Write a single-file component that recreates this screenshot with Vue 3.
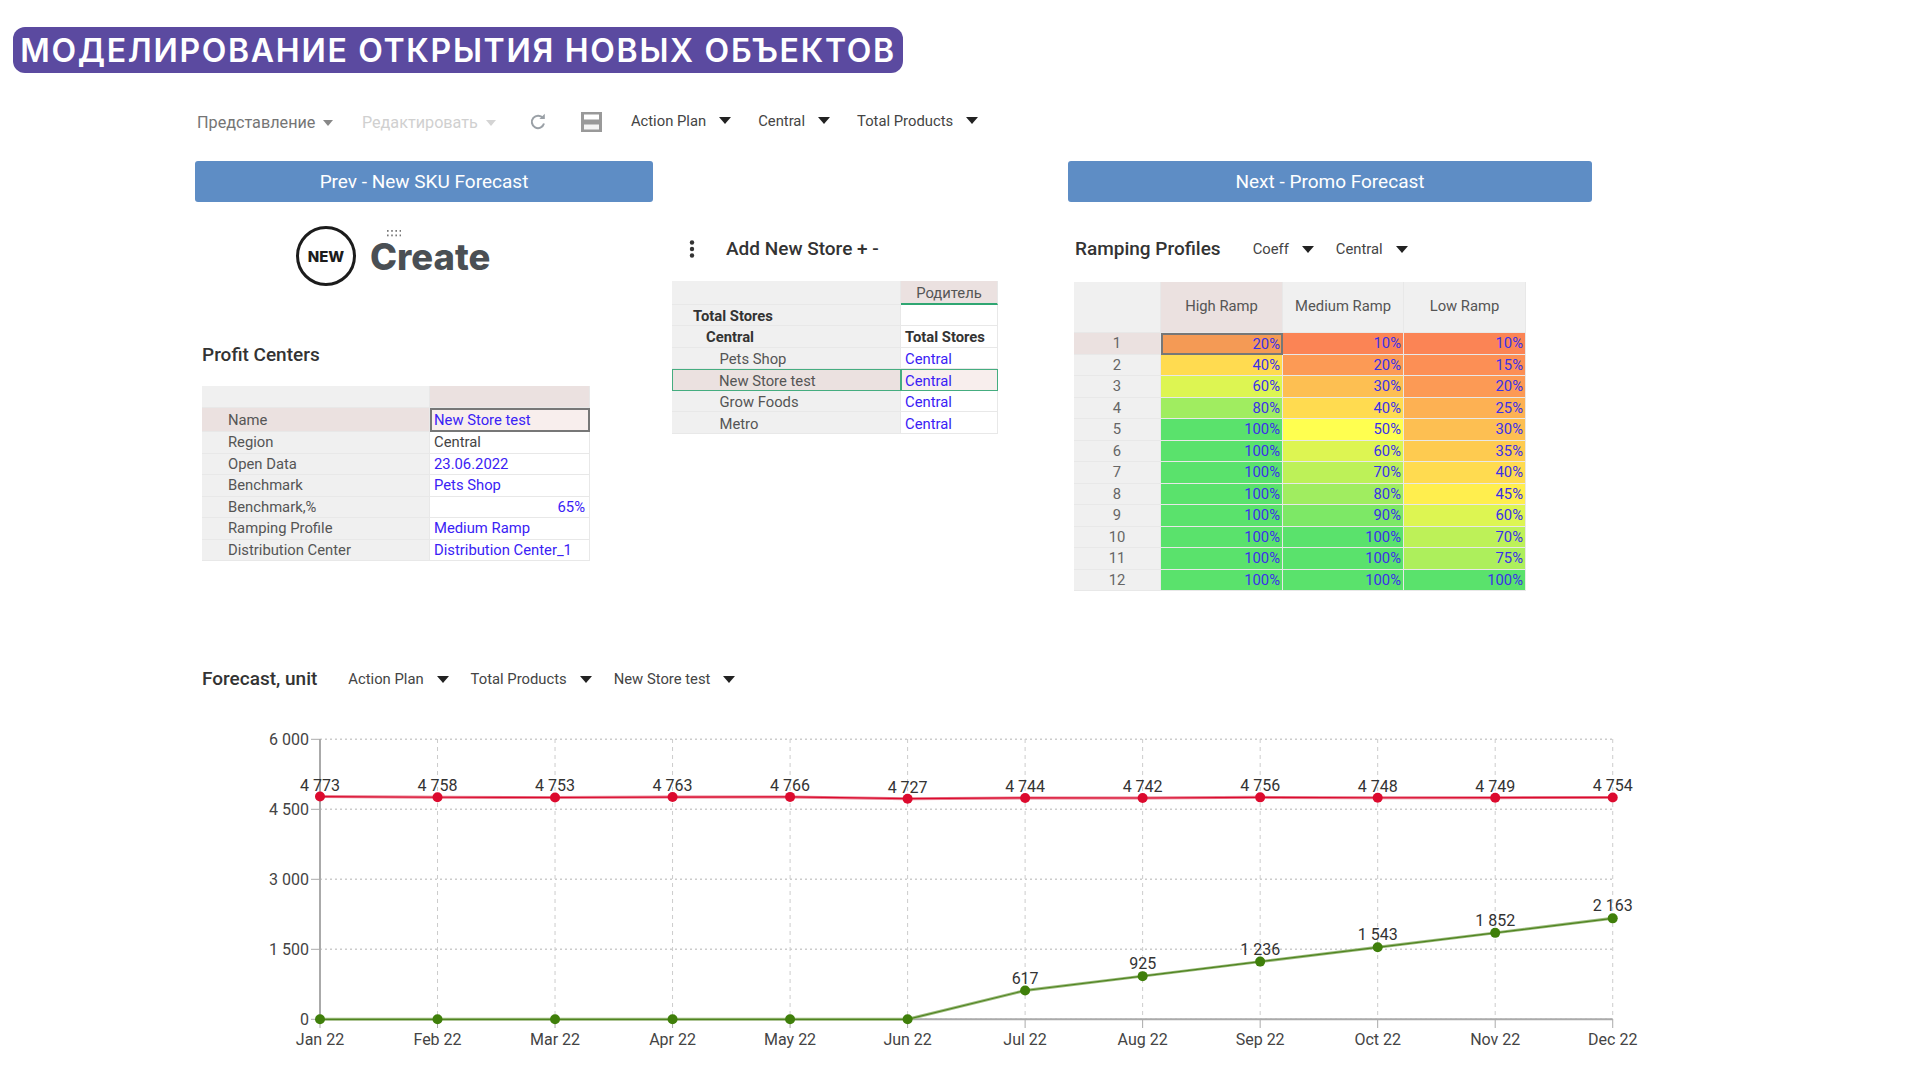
<script setup>
const toolbar = ['Action Plan', 'Central', 'Total Products']

const profit = [
  { name: 'Name', value: 'New Store test', blue: true, active: true },
  { name: 'Region', value: 'Central' },
  { name: 'Open Data', value: '23.06.2022', blue: true },
  { name: 'Benchmark', value: 'Pets Shop', blue: true },
  { name: 'Benchmark,%', value: '65%', blue: true, right: true },
  { name: 'Ramping Profile', value: 'Medium Ramp', blue: true },
  { name: 'Distribution Center', value: 'Distribution Center_1', blue: true }
]

const stores = [
  { name: 'Total Stores', level: 0, bold: true, parent: '' },
  { name: 'Central', level: 1, bold: true, parent: 'Total Stores', parentBold: true },
  { name: 'Pets Shop', level: 2, parent: 'Central' },
  { name: 'New Store test', level: 2, parent: 'Central', active: true },
  { name: 'Grow Foods', level: 2, parent: 'Central' },
  { name: 'Metro', level: 2, parent: 'Central' }
]

const heat = {
  10: '#fb8455', 15: '#fc8f55', 20: '#fc9a55', 25: '#fdb153', 30: '#fdbf52', 35: '#fecb50',
  40: '#ffdb50', 45: '#ffee4e', 50: '#ffff50', 60: '#ddf552', 70: '#bdf158', 75: '#adef5c',
  80: '#a0ed60', 90: '#7de866', 100: '#5ae26c'
}

const ramping = [
  [20, 10, 10], [40, 20, 15], [60, 30, 20], [80, 40, 25], [100, 50, 30], [100, 60, 35],
  [100, 70, 40], [100, 80, 45], [100, 90, 60], [100, 100, 70], [100, 100, 75], [100, 100, 100]
]

const months = ['Jan 22', 'Feb 22', 'Mar 22', 'Apr 22', 'May 22', 'Jun 22', 'Jul 22', 'Aug 22', 'Sep 22', 'Oct 22', 'Nov 22', 'Dec 22']
const red = [4773, 4758, 4753, 4763, 4766, 4727, 4744, 4742, 4756, 4748, 4749, 4754]
const green = [0, 0, 0, 0, 0, 0, 617, 925, 1236, 1543, 1852, 2163]
const ticks = [0, 1500, 3000, 4500, 6000]

// chart coordinates are page pixels, the svg viewBox starts at y=695
const xAt = (i) => 320 + i * 117.52
const yAt = (v) => 1019.3 - v * (280 / 6000)
const fmt = (v) => String(v).replace(/\B(?=(\d{3})+$)/g, ' ')
const line = (vals) => vals.map((v, i) => `${xAt(i)},${yAt(v)}`).join(' ')
</script>

<template>
  <div class="page">
    <div class="pill">МОДЕЛИРОВАНИЕ ОТКРЫТИЯ НОВЫХ ОБЪЕКТОВ</div>

    <div class="toolbar">
      <span class="menu">Представление<i class="caret caret-grey"></i></span>
      <span class="menu menu-off">Редактировать<i class="caret caret-light"></i></span>
      <svg class="ico-refresh" width="18" height="18" viewBox="0 0 18 18" fill="none">
        <path d="M14 5.2A6.2 6.2 0 1 0 15 10.6" stroke="#9aa0a6" stroke-width="2" />
        <path d="M10.4 6h5.4V.8z" fill="#9aa0a6" />
      </svg>
      <svg class="ico-save" width="21" height="20" viewBox="0 0 21 20">
        <rect width="21" height="20" fill="#999" />
        <rect x="3" y="2.5" width="15" height="5" fill="#fff" />
        <rect x="3" y="12.5" width="15" height="5" fill="#f4f4f4" />
      </svg>
      <span v-for="t in toolbar" :key="t" class="drop">{{ t }}<i class="caret"></i></span>
    </div>

    <div class="nav">
      <button class="nav-btn nav-prev">Prev - New SKU Forecast</button>
      <button class="nav-btn nav-next">Next - Promo Forecast</button>
    </div>

    <div class="panels">
      <section class="panel panel-left">
        <div class="logo">
          <div class="logo-badge">NEW</div>
          <div class="logo-text">
            <svg class="logo-dots" width="14" height="7" viewBox="0 0 14 7" fill="#777">
              <template v-for="row in 2" :key="row">
                <rect v-for="col in 4" :key="col" :x="(col - 1) * 4.2" :y="(row - 1) * 4.5" width="1.6" height="1.8" />
              </template>
            </svg>
            Create
          </div>
        </div>
        <h2 class="title title-profit">Profit Centers</h2>
        <div class="grid grid-profit">
          <div class="cell head"></div>
          <div class="cell head head-on"></div>
          <template v-for="row in profit" :key="row.name">
            <div class="cell label" :class="{ 'label-on': row.active }">{{ row.name }}</div>
            <div class="cell val" :class="{ blue: row.blue, right: row.right, 'val-focus': row.active }">{{ row.value }}</div>
          </template>
        </div>
      </section>

      <section class="panel panel-mid">
        <div class="panel-head">
          <svg class="dots" width="6" height="18" viewBox="0 0 6 18" fill="#333">
            <circle cx="3" cy="2.5" r="2.2" />
            <circle cx="3" cy="9" r="2.2" />
            <circle cx="3" cy="15.5" r="2.2" />
          </svg>
          <h2 class="title">Add New Store + -</h2>
        </div>
        <div class="grid grid-stores">
          <div class="cell head"></div>
          <div class="cell head head-on head-green">Родитель</div>
          <template v-for="row in stores" :key="row.name">
            <div class="cell label" :class="['lv' + row.level, { bold: row.bold, 'label-on': row.active, 'sel-left': row.active }]">{{ row.name }}</div>
            <div class="cell val" :class="{ blue: !row.parentBold && row.parent, bold: row.parentBold, 'val-on': row.active, 'sel-right': row.active }">{{ row.parent }}</div>
          </template>
        </div>
      </section>

      <section class="panel panel-right">
        <div class="panel-head head-ramp">
          <h2 class="title">Ramping Profiles</h2>
          <span class="drop drop-coeff">Coeff<i class="caret"></i></span>
          <span class="drop">Central<i class="caret"></i></span>
        </div>
        <div class="grid grid-ramp">
          <div class="cell head"></div>
          <div class="cell head head-on center head-ramp-cell">High Ramp</div>
          <div class="cell head center head-ramp-cell">Medium Ramp</div>
          <div class="cell head center head-ramp-cell">Low Ramp</div>
          <template v-for="(row, i) in ramping" :key="i">
            <div class="cell label center" :class="{ 'label-on': i === 0 }">{{ i + 1 }}</div>
            <div
              v-for="(v, j) in row"
              :key="j"
              class="cell pct"
              :class="{ 'pct-focus': i === 0 && j === 0 }"
              :style="{ background: i === 0 && j === 0 ? '#f49a55' : heat[v] }"
            >{{ v }}%</div>
          </template>
        </div>
      </section>
    </div>

    <div class="forecast-head">
      <h2 class="title">Forecast, unit</h2>
      <span class="drop">Action Plan<i class="caret"></i></span>
      <span class="drop">Total Products<i class="caret"></i></span>
      <span class="drop">New Store test<i class="caret"></i></span>
    </div>

    <svg class="chart" width="1700" height="385" viewBox="0 695 1700 385">
      <g v-for="t in ticks" :key="t">
        <line class="grid-h" x1="320" :x2="xAt(11)" :y1="yAt(t)" :y2="yAt(t)" />
        <line class="axis" x1="311" x2="320" :y1="yAt(t)" :y2="yAt(t)" />
        <text class="txt" x="309" :y="yAt(t) + 5.5" text-anchor="end">{{ fmt(t) }}</text>
      </g>
      <g v-for="(m, i) in months" :key="m">
        <line class="grid-v" :x1="xAt(i)" :x2="xAt(i)" y1="739" y2="1019" />
        <line class="axis" :x1="xAt(i)" :x2="xAt(i)" y1="1019" y2="1028" />
        <text class="txt" :x="xAt(i)" y="1045" text-anchor="middle">{{ m }}</text>
      </g>
      <line class="axis axis-main" x1="320" x2="320" y1="739" y2="1019.3" />
      <line class="axis axis-main" x1="320" :x2="xAt(11)" y1="1019.3" y2="1019.3" />

      <polyline class="halo" stroke="#e87f90" :points="line(red)" />
      <polyline class="series" stroke="#dc0a2e" :points="line(red)" />
      <polyline class="halo" stroke="#9dbb7e" :points="line(green)" />
      <polyline class="series" stroke="#4f8420" :points="line(green)" />

      <g v-for="(v, i) in red" :key="'r' + i">
        <circle :cx="xAt(i)" :cy="yAt(v)" r="5" fill="#dc0a2e" />
        <text class="txt txt-val" :x="xAt(i)" :y="yAt(v) - 6" text-anchor="middle">{{ fmt(v) }}</text>
      </g>
      <g v-for="(v, i) in green" :key="'g' + i">
        <circle :cx="xAt(i)" :cy="yAt(v)" r="5" fill="#3f7f0a" />
        <text v-if="v" class="txt txt-val" :x="xAt(i)" :y="yAt(v) - 7" text-anchor="middle">{{ fmt(v) }}</text>
      </g>
    </svg>
  </div>
</template>

<style>
html, body {
  margin: 0;
  background: #fff;
}
</style>

<style scoped>
.page {
  width: 1920px;
  height: 1080px;
  overflow: hidden;
  padding-top: 27px;
  box-sizing: border-box;
  font-family: Roboto, "Liberation Sans", sans-serif;
  font-size: 14.8px;
  color: #444;
}

.pill {
  width: 890px;
  height: 46px;
  margin-left: 13px;
  box-sizing: border-box;
  display: flex;
  align-items: center;
  justify-content: center;
  border-radius: 12px;
  background: #5b4aa0;
  color: #fff;
  font-family: Inter, "Noto Sans", sans-serif;
  font-size: 32px;
  font-weight: 600;
  letter-spacing: 1.7px;
  white-space: nowrap;
}

.toolbar {
  display: flex;
  align-items: center;
  height: 32px;
  margin-top: 33px;
  margin-left: 197px;
}

.menu {
  display: flex;
  align-items: center;
  margin-top: 1px;
  color: #757575;
  font-size: 16.2px;
  margin-right: 28.5px;
}

.menu-off {
  color: #d0d0d0;
  margin-right: 0;
}

.ico-refresh {
  margin-left: 33px;
}

.ico-save {
  margin-left: 34px;
  margin-right: 29px;
}

.toolbar .drop {
  margin-top: -3px;
  margin-right: 27px;
}

.drop {
  display: inline-flex;
  align-items: center;
  color: #444;
}

.caret {
  width: 0;
  height: 0;
  margin-left: 13px;
  border-left: 6px solid transparent;
  border-right: 6px solid transparent;
  border-top: 7px solid #222;
}

.caret-grey {
  margin-left: 8px;
  border-left-width: 5.5px;
  border-right-width: 5.5px;
  border-top: 6px solid #888;
}

.caret-light {
  margin-left: 8px;
  border-left-width: 5.5px;
  border-right-width: 5.5px;
  border-top: 6px solid #d4d4d4;
}

.nav {
  display: flex;
  gap: 415px;
  margin-top: 23px;
  margin-left: 195px;
}

.nav-btn {
  height: 41px;
  padding: 0;
  border: 0;
  border-radius: 3px;
  background: #5e8dc5;
  color: #fff;
  font-family: inherit;
  font-size: 19px;
  font-weight: 400;
}

.nav-prev {
  width: 458px;
}

.nav-next {
  width: 524px;
}

.panels {
  display: flex;
  height: 388px;
  margin-left: 202px;
}

.panel-left {
  width: 388px;
  padding-top: 24px;
}

.panel-mid {
  width: 326px;
  margin-left: 82px;
  padding-top: 31px;
}

.panel-right {
  width: 452px;
  margin-left: 76px;
  padding-top: 31px;
}

.logo {
  display: flex;
  align-items: center;
  height: 60px;
  margin-left: 94px;
  gap: 14px;
}

.logo-badge {
  width: 60px;
  height: 60px;
  box-sizing: border-box;
  display: flex;
  align-items: center;
  justify-content: center;
  border: 3px solid #1c1c1c;
  border-radius: 50%;
  color: #1c1c1c;
  font-family: Inter, sans-serif;
  font-size: 15px;
  font-weight: 800;
}

.logo-text {
  position: relative;
  color: #4a4f54;
  font-family: Inter, sans-serif;
  font-size: 36.4px;
  font-weight: 800;
  margin-top: 2px;
}

.logo-dots {
  position: absolute;
  top: -5px;
  left: 17px;
}

.title {
  margin: 0;
  color: #333;
  font-size: 19px;
  font-weight: 500;
  line-height: 26px;
  white-space: nowrap;
}

.title-profit {
  margin-top: 56px;
}

.panel-head {
  display: flex;
  align-items: center;
  height: 32px;
  gap: 31px;
  padding-left: 17px;
}

.head-ramp {
  padding-left: 1px;
  gap: 0;
}

.drop-coeff {
  margin-left: 32px;
  margin-right: 22px;
}

.grid {
  display: grid;
}

.grid-profit {
  grid-template-columns: 228px 160px;
  grid-template-rows: 22px 24px repeat(6, 21.5px);
  margin-top: 18px;
}

.grid-stores {
  grid-template-columns: 229px 97px;
  grid-template-rows: 23.5px repeat(6, 21.6px);
  margin-top: 16px;
}

.grid-stores .cell {
  padding-top: 2px;
}

.grid-ramp {
  grid-template-columns: 87px 122px 121px 122px;
  grid-template-rows: 51px repeat(12, 21.5px);
  margin-top: 17px;
}

.cell {
  display: flex;
  align-items: center;
  box-sizing: border-box;
  white-space: nowrap;
  border: solid #e8e8e8;
  border-width: 0 1px 1px 0;
}

.head {
  background: #f0f0f0;
  color: #555;
}

.head-ramp-cell {
  padding-bottom: 3px;
}

.head-on {
  background: #ebe1e0;
  justify-content: center;
}

.head-green {
  border-bottom: 2px solid #2fa672;
}

.center {
  justify-content: center;
}

.label {
  padding-left: 26px;
  background: #f0f0f0;
  color: #555;
}

.label-on {
  background: #ebe1e0;
}

.grid-stores .label {
  padding-left: 0;
}

.grid-stores .lv0 {
  padding-left: 21px;
}

.grid-stores .lv1 {
  padding-left: 34px;
}

.grid-stores .lv2 {
  padding-left: 47.5px;
}

.grid-stores .sel-left {
  padding-left: 46px;
}

.grid-ramp .label {
  padding-left: 0;
  justify-content: center;
  color: #666;
}

.val {
  padding: 0 4px;
  background: #fff;
  color: #444;
}

.bold {
  font-weight: 700;
  color: #333;
}

.blue {
  color: #3a22f5;
}

.right {
  justify-content: flex-end;
}

.val-focus {
  padding: 0 2px;
  background: #f8eeed;
  border: 2px solid #777;
}

.val-on {
  background: #f8eeed;
}

.sel-left,
.sel-right {
  border: 1.5px solid #45ad80;
}

.sel-right {
  padding: 0 3px;
}

.pct {
  justify-content: flex-end;
  padding-right: 2px;
  border-color: #e8e8e8;
  color: #3a30e8;
}

.pct-focus {
  padding-right: 1px;
  border: 2px solid #777;
}

.forecast-head {
  display: flex;
  align-items: center;
  gap: 22px;
  height: 32px;
  margin-top: 73px;
  margin-left: 202px;
}

.forecast-head .title {
  margin-right: 9px;
}

.chart {
  display: block;
}

.txt {
  fill: #444;
  font-size: 16px;
}

.txt-val {
  fill: #333;
}

.grid-h {
  stroke: #ccc;
  stroke-width: 1.5;
  stroke-dasharray: 2 3;
}

.grid-v {
  stroke: #ccc;
  stroke-width: 1;
  stroke-dasharray: 4 4;
}

.axis {
  stroke: #aaa;
  stroke-width: 1;
}

.axis-main {
  stroke-width: 2;
}

.halo {
  fill: none;
  stroke-width: 3;
}

.series {
  fill: none;
  stroke-width: 1.2;
}
</style>
